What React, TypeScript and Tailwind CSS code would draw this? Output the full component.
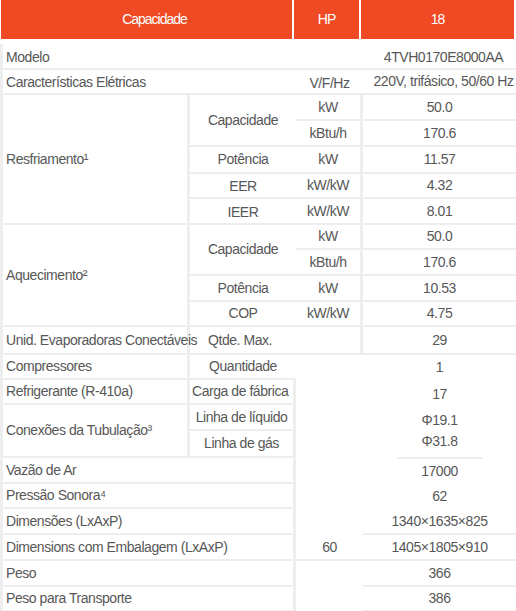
import { type ReactNode } from "react";

const line = "border-b-2 border-[#eeeeee]";

type CellProps = {
  className?: string;
  children?: ReactNode;
};

const Cell = ({ className = "", children }: CellProps) => (
  <div className={`flex items-center ${className}`}>{children}</div>
);

const subRows: { row: string; unit: string; value: string }[] = [
  { row: "row-start-3", unit: "kW", value: "50.0" },
  { row: "row-start-4", unit: "kBtu/h", value: "170.6" },
  { row: "row-start-5", unit: "kW", value: "11.57" },
  { row: "row-start-6", unit: "kW/kW", value: "4.32" },
  { row: "row-start-7", unit: "kW/kW", value: "8.01" },
  { row: "row-start-8", unit: "kW", value: "50.0" },
  { row: "row-start-9", unit: "kBtu/h", value: "170.6" },
  { row: "row-start-10", unit: "kW", value: "10.53" },
  { row: "row-start-11", unit: "kW/kW", value: "4.75" },
];

const lower: { row: string; label: string; value: string; lined: boolean }[] = [
  { row: "row-start-17", label: "Vazão de Ar", value: "17000", lined: false },
  { row: "row-start-18", label: "Pressão Sonora⁴", value: "62", lined: false },
  { row: "row-start-19", label: "Dimensões (LxAxP)", value: "1340×1635×825", lined: true },
  { row: "row-start-20", label: "Dimensions com Embalagem (LxAxP)", value: "1405×1805×910", lined: true },
  { row: "row-start-21", label: "Peso", value: "366", lined: true },
  { row: "row-start-22", label: "Peso para Transporte", value: "386", lined: true },
];

export default function App() {
  return (
    <div
      className="h-[611px] w-[516px] overflow-hidden bg-white text-[14px] tracking-[-0.45px] text-[#575757]"
      style={{ fontFamily: "'Liberation Sans', Arial, sans-serif" }}
    >
      <div className="ml-px grid h-[39px] w-[513px] grid-cols-[293px_67px_153px] bg-[#f04a24] tracking-[-1px] text-white">
        <div className="flex items-center justify-center border-r-2 border-white pl-4">Capacidade</div>
        <div className="flex items-center justify-center border-r-2 border-white">HP</div>
        <div className="flex items-center justify-center">18</div>
      </div>

      <div className="mt-[5px] grid grid-cols-[184px_3px_106px_67px_153px] grid-rows-[26px_25px_26px_26px_27px_25px_26px_25px_26px_26px_25px_28px_25px_25px_26px_27px_26px_25px_26px_26px_26px_25px] border-b-[3px] border-l-[3px] border-[#eeeeee]">
        {/* Modelo / Características */}
        <Cell className={`col-span-4 col-start-1 row-start-1 pt-[3px] pl-[3px] ${line}`}>Modelo</Cell>
        <Cell className={`col-start-5 row-start-1 justify-center pt-[3px] ${line}`}>
          <span className="pl-2">4TVH0170E8000AA</span>
        </Cell>
        <Cell className={`col-span-3 col-start-1 row-start-2 pt-[2px] pl-[3px] ${line}`}>Características Elétricas</Cell>
        <Cell className={`col-start-4 row-start-2 justify-center pt-[3px] ${line}`}>V/F/Hz</Cell>
        <Cell className={`col-start-5 row-start-2 justify-center whitespace-nowrap ${line}`}>
          <span className="pl-2">220V, trifásico, 50/60 Hz</span>
        </Cell>

        {/* vertical separator */}
        <div className="col-start-2 row-span-14 row-start-3 bg-[#eeeeee]" />

        {/* Resfriamento */}
        <Cell className={`col-start-1 row-span-5 row-start-3 pl-[3px] ${line}`}>Resfriamento¹</Cell>
        <Cell className={`col-start-3 row-span-2 row-start-3 justify-center ${line}`}>Capacidade</Cell>
        <Cell className={`col-start-3 row-start-5 justify-center ${line}`}>Potência</Cell>
        <Cell className={`col-start-3 row-start-6 justify-center pt-[2px] ${line}`}>EER</Cell>
        <Cell className={`col-start-3 row-start-7 justify-center pt-[2px] ${line}`}>IEER</Cell>

        {/* Aquecimento */}
        <Cell className={`col-start-1 row-span-4 row-start-8 pl-[3px] ${line}`}>Aquecimento²</Cell>
        <Cell className={`col-start-3 row-span-2 row-start-8 justify-center ${line}`}>Capacidade</Cell>
        <Cell className={`col-start-3 row-start-10 justify-center ${line}`}>Potência</Cell>
        <Cell className={`col-start-3 row-start-11 justify-center ${line}`}>COP</Cell>

        {subRows.map((r, i) => (
          <div key={i} className="contents">
            <Cell className={`col-start-4 ${r.row} justify-center border-r-[3px] border-b-2 border-[#eeeeee]`}>
              {r.unit}
            </Cell>
            <Cell className={`col-start-5 ${r.row} justify-center ${line}`}>{r.value}</Cell>
          </div>
        ))}

        {/* Unid. Evaporadoras */}
        <Cell className={`col-start-1 row-start-12 whitespace-nowrap pl-[3px] ${line}`}>
          Unid. Evaporadoras Conectáveis
        </Cell>
        <Cell className="col-span-2 col-start-3 row-start-12 items-end border-r-[3px] border-b-2 border-[#eeeeee] pb-[2px]">
          <span className="pl-[18px]">Qtde. Max.</span>
        </Cell>
        <Cell className={`col-start-5 row-start-12 items-start justify-center pt-[3px] ${line}`}>29</Cell>

        {/* Compressores / Refrigerante */}
        <Cell className={`col-start-1 row-start-13 pl-[3px] ${line}`}>Compressores</Cell>
        <Cell className={`col-start-3 row-start-13 justify-center ${line}`}>Quantidade</Cell>
        <Cell className="col-start-5 row-start-13 justify-center">1</Cell>

        <Cell className={`col-start-1 row-start-14 pl-[3px] ${line}`}>Refrigerante (R-410a)</Cell>
        <Cell className={`col-start-3 row-start-14 whitespace-nowrap border-r-[3px] pl-[2px] ${line}`}>
          Carga de fábrica
        </Cell>
        <Cell className="col-start-5 row-start-14 items-end justify-center">17</Cell>

        {/* Conexões */}
        <Cell className={`col-start-1 row-span-2 row-start-15 whitespace-nowrap pl-[3px] ${line}`}>
          Conexões da Tubulação³
        </Cell>
        <Cell className={`col-start-3 row-start-15 justify-center whitespace-nowrap border-r-[3px] ${line}`}>
          Linha de líquido
        </Cell>
        <Cell className={`col-start-3 row-start-16 justify-center whitespace-nowrap border-r-[3px] ${line}`}>
          Linha de gás
        </Cell>
        <Cell className="col-start-5 row-start-15 items-end justify-center">Φ19.1</Cell>
        <Cell className="col-start-5 row-start-16 items-start justify-center">
          <span className="border-b-2 border-[#eeeeee] px-6 pb-[5px]">Φ31.8</span>
        </Cell>

        {/* lower rows */}
        {lower.map((r) => (
          <div key={r.label} className="contents">
            <Cell className={`col-span-3 col-start-1 ${r.row} whitespace-nowrap border-r-[3px] border-b-2 border-[#eeeeee] pl-[3px]`}>
              {r.label}
            </Cell>
            <Cell className={`col-start-5 ${r.row} justify-center ${r.lined ? line : ""}`}>{r.value}</Cell>
          </div>
        ))}
        <Cell className="col-start-4 row-start-20 justify-center border-b-2 border-[#eeeeee]">60</Cell>
      </div>
    </div>
  );
}
